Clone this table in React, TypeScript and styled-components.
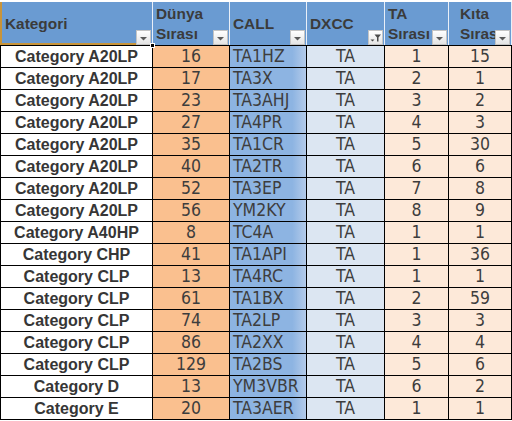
import React from 'react';
import styled, { createGlobalStyle } from 'styled-components';

const GlobalStyle = createGlobalStyle`
  html, body {
    margin: 0;
    padding: 0;
    background: #ffffff;
  }
`;

interface RowData {
  category: string;
  world: string;
  call: string;
  dxcc: string;
  ta: string;
  continent: string;
}

const rows: RowData[] = [
  { category: 'Category A20LP', world: '16', call: 'TA1HZ', dxcc: 'TA', ta: '1', continent: '15' },
  { category: 'Category A20LP', world: '17', call: 'TA3X', dxcc: 'TA', ta: '2', continent: '1' },
  { category: 'Category A20LP', world: '23', call: 'TA3AHJ', dxcc: 'TA', ta: '3', continent: '2' },
  { category: 'Category A20LP', world: '27', call: 'TA4PR', dxcc: 'TA', ta: '4', continent: '3' },
  { category: 'Category A20LP', world: '35', call: 'TA1CR', dxcc: 'TA', ta: '5', continent: '30' },
  { category: 'Category A20LP', world: '40', call: 'TA2TR', dxcc: 'TA', ta: '6', continent: '6' },
  { category: 'Category A20LP', world: '52', call: 'TA3EP', dxcc: 'TA', ta: '7', continent: '8' },
  { category: 'Category A20LP', world: '56', call: 'YM2KY', dxcc: 'TA', ta: '8', continent: '9' },
  { category: 'Category A40HP', world: '8', call: 'TC4A', dxcc: 'TA', ta: '1', continent: '1' },
  { category: 'Category CHP', world: '41', call: 'TA1API', dxcc: 'TA', ta: '1', continent: '36' },
  { category: 'Category CLP', world: '13', call: 'TA4RC', dxcc: 'TA', ta: '1', continent: '1' },
  { category: 'Category CLP', world: '61', call: 'TA1BX', dxcc: 'TA', ta: '2', continent: '59' },
  { category: 'Category CLP', world: '74', call: 'TA2LP', dxcc: 'TA', ta: '3', continent: '3' },
  { category: 'Category CLP', world: '86', call: 'TA2XX', dxcc: 'TA', ta: '4', continent: '4' },
  { category: 'Category CLP', world: '129', call: 'TA2BS', dxcc: 'TA', ta: '5', continent: '6' },
  { category: 'Category D', world: '13', call: 'YM3VBR', dxcc: 'TA', ta: '6', continent: '2' },
  { category: 'Category E', world: '20', call: 'TA3AER', dxcc: 'TA', ta: '1', continent: '1' },
];

const FilterButton = ({ active }: { active?: boolean }) => (
  <DropButton>
    {active ? (
      <svg width="13" height="13" viewBox="0 0 13 13">
        <path d="M1.5 8.5 L5.5 8.5 L3.5 10.5 Z" fill="#4a4a4a" />
        <path d="M5.5 3.5 L12 3.5 L9.5 6.5 L9.5 10.5 L8 10.5 L8 6.5 Z" fill="#4a4a4a" />
      </svg>
    ) : (
      <svg width="13" height="13" viewBox="0 0 13 13">
        <path d="M3 6 L10 6 L6.5 9.5 Z" fill="#5a5a5a" />
      </svg>
    )}
  </DropButton>
);

const App = () => {
  return (
    <>
      <GlobalStyle />
      <Sheet>
        <HeaderRow>
          <HeadCell $selected>
            Kategori
            <FilterButton />
            <FillHandle />
          </HeadCell>
          <HeadCell>
            Dünya
            <br />
            Sırası
            <FilterButton />
          </HeadCell>
          <HeadCell>
            CALL
            <FilterButton />
          </HeadCell>
          <HeadCell>
            DXCC
            <FilterButton active />
          </HeadCell>
          <HeadCell>
            TA
            <br />
            Sırası
            <FilterButton />
          </HeadCell>
          <HeadCell $indent={11}>
            Kıta
            <br />
            Sırası
            <FilterButton />
          </HeadCell>
        </HeaderRow>
        <Body>
          {rows.map((row, idx) => (
            <React.Fragment key={idx}>
              <CategoryCell>{row.category}</CategoryCell>
              <ValueCell $bg="#fac08f">{row.world}</ValueCell>
              <CallCell>{row.call}</CallCell>
              <ValueCell $bg="#dce6f2">{row.dxcc}</ValueCell>
              <ValueCell $bg="#fde9d9">{row.ta}</ValueCell>
              <ValueCell $bg="#fde9d9">{row.continent}</ValueCell>
            </React.Fragment>
          ))}
        </Body>
      </Sheet>
    </>
  );
};

const Sheet = styled.div`
  width: 512px;
  padding-top: 2px;
  background: #ffffff;
`;

const HeaderRow = styled.div`
  display: grid;
  grid-template-columns: 152px 76px 76px 77px 63px 62px;
  grid-template-rows: 43px;
  column-gap: 1px;
  padding-right: 1px;
  background: #e9eff8;
`;

const HeadCell = styled.div<{ $selected?: boolean; $indent?: number }>`
  position: relative;
  display: flex;
  flex-direction: column;
  justify-content: center;
  padding-left: ${({ $selected, $indent }) => ($selected ? 5 : $indent ?? 3)}px;
  background: #6a9bd2;
  color: #3b3b3b;
  font-family: 'Liberation Sans', Arial, sans-serif;
  font-weight: bold;
  font-size: 15.4px;
  line-height: 20px;
  white-space: nowrap;
  overflow: visible;
  box-shadow: ${({ $selected }) => ($selected ? 'inset 2px 0 0 #c8943a, inset 0 -2px 0 #c8943a' : 'none')};
`;

const DropButton = styled.span`
  position: absolute;
  right: 1px;
  bottom: 0;
  width: 15px;
  height: 15px;
  box-sizing: border-box;
  display: flex;
  align-items: center;
  justify-content: center;
  background: linear-gradient(#ffffff, #e4e4e4);
  border: 1px solid #c4c4c4;
`;

const FillHandle = styled.span`
  position: absolute;
  right: -3px;
  bottom: -3px;
  width: 5px;
  height: 5px;
  box-sizing: border-box;
  background: #000000;
  border: 1px solid #ffffff;
  z-index: 2;
`;

const Body = styled.div`
  display: grid;
  grid-template-columns: 151px 76px 76px 77px 63px 62px;
  grid-auto-rows: 21px;
  gap: 1px;
  padding: 1px;
  background: #000000;
`;

const BaseCell = styled.div`
  display: flex;
  align-items: center;
  line-height: 21px;
  white-space: nowrap;
  overflow: hidden;
`;

const CategoryCell = styled(BaseCell)`
  justify-content: center;
  background: #ffffff;
  color: #363636;
  font-family: 'Liberation Sans', Arial, sans-serif;
  font-weight: bold;
  font-size: 16px;
`;

const ValueCell = styled(BaseCell)<{ $bg: string }>`
  justify-content: center;
  background: ${({ $bg }) => $bg};
  color: #3d3d3d;
  font-family: 'DejaVu Sans Condensed', 'DejaVu Sans', sans-serif;
  font-stretch: condensed;
  font-size: 17.5px;
`;

const CallCell = styled(BaseCell)`
  padding-left: 3px;
  background: linear-gradient(to right, #8db4e2 82%, #b4cbea 100%);
  color: #3d3d3d;
  font-family: 'DejaVu Sans Condensed', 'DejaVu Sans', sans-serif;
  font-stretch: condensed;
  font-size: 17.5px;
`;

export default App;
